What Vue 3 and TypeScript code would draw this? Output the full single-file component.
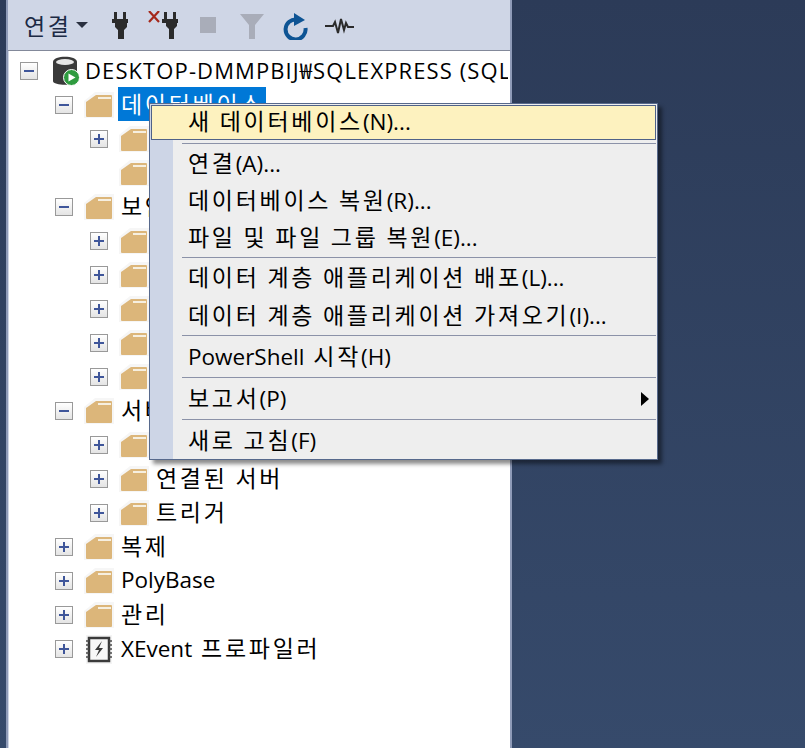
<script setup lang="ts">
interface Row { label: string; level: number; open?: boolean; kind?: string; selected?: boolean }
const rows: Row[] = [
  { label: '데이터베이스', level: 1, open: true, selected: true },
  { label: '시스템 데이터베이스', level: 2 },
  { label: '데이터베이스 스냅숏', level: 2, kind: 'leaf' },
  { label: '보안', level: 1, open: true },
  { label: '로그인', level: 2 },
  { label: '서버 역할', level: 2 },
  { label: '자격 증명', level: 2 },
  { label: '암호화 공급자', level: 2 },
  { label: '감사', level: 2 },
  { label: '서버 개체', level: 1, open: true },
  { label: '백업 장치', level: 2 },
  { label: '연결된 서버', level: 2 },
  { label: '트리거', level: 2 },
  { label: '복제', level: 1 },
  { label: 'PolyBase', level: 1 },
  { label: '관리', level: 1 },
  { label: 'XEvent 프로파일러', level: 1, kind: 'xevent' },
]
interface Item { label: string; arrow?: boolean; hot?: boolean }
const groups: Item[][] = [
  [{ label: '새 데이터베이스(N)...', hot: true }],
  [{ label: '연결(A)...' }, { label: '데이터베이스 복원(R)...' }, { label: '파일 및 파일 그룹 복원(E)...' }],
  [{ label: '데이터 계층 애플리케이션 배포(L)...' }, { label: '데이터 계층 애플리케이션 가져오기(I)...' }],
  [{ label: 'PowerShell 시작(H)' }],
  [{ label: '보고서(P)', arrow: true }],
  [{ label: '새로 고침(F)' }],
]
function seg(text: string): { t: string; ko: boolean }[] {
  return text
    .split(/([\uAC00-\uD7A3][\uAC00-\uD7A3 ]*)/)
    .filter((t) => t.length > 0)
    .map((t) => ({ t, ko: /[\uAC00-\uD7A3]/.test(t) }))
}
</script>

<template>
  <div class="desk">
    <section class="panel">
      <header class="toolbar">
        <span class="connect ko">연결</span>
        <i class="caret"></i>
        <svg class="plug" width="16" height="27" viewBox="0 0 16 27"><path d="M2 0h3v7h6V0h3v7h2v4h-1v4l-3 3v9H6v-9l-3-3v-4H0V7h2z" fill="#2b2b2b"/></svg>
        <svg class="plugx" width="30" height="28" viewBox="0 0 30 28"><path d="M1 0l10 11M11 0L1 11" stroke="#a5281b" stroke-width="2.2"/><path d="M16 1h3v7h6V1h3v7h2v4h-1v3l-3 3v10h-5V18l-3-3v-3h-4V8h2z" fill="#2b2b2b"/></svg>
        <i class="stop"></i>
        <svg class="funnel" width="24" height="25" viewBox="0 0 24 25"><path d="M0 0h24L15 11v14H9V11z" fill="#a9adb9"/></svg>
        <svg class="refresh" width="25" height="27" viewBox="0 0 25 27"><path d="M14 6.500A10 10 0 1 0 22.500 15" fill="none" stroke="#0e5494" stroke-width="4"/><path d="M11 0l11 7-11 6z" fill="#0e5494"/></svg>
        <svg class="pulse" width="29" height="18" viewBox="0 0 29 18"><path d="M0 10h8l2-4 3 11 3-14 3 11 2-7 2 4h6" fill="none" stroke="#2b2b2b" stroke-width="2"/></svg>
      </header>
      <div class="tree">
        <div class="root">
          <span class="box"><i class="h"></i></span>
          <svg class="db" width="28" height="30" viewBox="0 0 28 30">
            <path d="M1 6c0-7 24-7 24 0v19c0 5-24 5-24 0z" fill="#3a3a3a"/>
            <ellipse cx="13" cy="6" rx="9" ry="3" fill="#e6e6e6"/>
            <circle cx="19.500" cy="21.500" r="8" fill="#2e9b3f" stroke="#fff" stroke-width="1"/>
            <path d="M16.500 17.500l7 4-7 4z" fill="#fff"/>
          </svg>
          <span class="rootname">DESKTOP-DMMPBIJ₩SQLEXPRESS (SQL</span>
        </div>
        <div v-for="r in rows" :key="r.label" class="row" :class="'lv' + r.level">
          <span v-if="r.kind === 'leaf'" class="nobox"></span>
          <span v-else class="box"><i class="h"></i><i v-if="!r.open" class="v"></i></span>
          <svg v-if="r.kind === 'xevent'" class="xe" width="26" height="29" viewBox="0 0 26 29">
            <rect width="26" height="29" fill="#f4f4f4"/>
            <rect x="3" y="3" width="20" height="23" fill="#f8f8f8" stroke="#3a3a3a" stroke-width="2.500"/>
            <path d="M0 6h3M0 10h3M0 14h3M0 18h3M0 22h3M23 6h3M23 10h3M23 14h3M23 18h3M23 22h3" stroke="#4a4a4a" stroke-width="1.500"/>
            <path d="M16 6l-7 9h4l-3 7 7-9h-4z" fill="#3a3a3a"/>
          </svg>
          <svg v-else class="folder" width="30" height="26" viewBox="0 0 30 26">
            <path d="M0 9l11-9h19v26H0z" fill="#f6f6f6"/>
            <path d="M2 10L12 3h15q1 0 1 1v20q0 1-1 1H3q-1 0-1-1z" fill="#dcb67a"/>
            <rect x="14" y="5" width="13" height="2" fill="#f6efe0"/>
          </svg>
          <span class="label" :class="{ sel: r.selected }"><span v-for="(s, i) in seg(r.label)" :key="i" :class="{ ko: s.ko }">{{ s.t }}</span></span>
        </div>
      </div>
    </section>

    <nav class="menu">
      <template v-for="(g, i) in groups" :key="i">
        <div v-if="i > 0" class="sep"></div>
        <div v-for="m in g" :key="m.label" class="item" :class="[{ hot: m.hot }, 'n' + g.length]">
          <span v-for="(s, j) in seg(m.label)" :key="j" :class="{ ko: s.ko }">{{ s.t }}</span>
          <i v-if="m.arrow" class="arrow"></i>
        </div>
      </template>
    </nav>
  </div>
</template>

<style>
html, body { margin: 0; padding: 0; }
</style>

<style scoped>
.desk {
  position: relative;
  width: 805px;
  height: 748px;
  overflow: hidden;
  background: linear-gradient(180deg, #2c3b58 0%, #364a6b 100%);
  font-family: "Open Sans", "Noto Sans CJK KR", sans-serif;
  color: #000;
}
.ko {
  font-family: "Noto Sans CJK KR", sans-serif;
  font-size: 23px;
  letter-spacing: 2.7px;
  word-spacing: 0;
}
.panel {
  margin-left: 6px;
  width: 506px;
  height: 748px;
  box-sizing: border-box;
  background: #cfd6e6;
  border-left: 2px solid #8f9bb8;
  border-right: 2px solid #8f9bb8;
  display: flex;
  flex-direction: column;
}
.toolbar {
  height: 51px;
  flex: none;
  box-sizing: border-box;
  display: flex;
  align-items: center;
  padding-left: 16px;
  border-bottom: 1px solid #83899a;
}
.connect { color: #1c2a44; line-height: 1; }
.caret {
  margin-left: 4px;
  border-left: 6px solid transparent;
  border-right: 6px solid transparent;
  border-top: 6px solid #2a3040;
}
.plug { margin-left: 24px; margin-top: 1px; }
.plugx { margin-left: 20px; margin-top: -1px; }
.stop { margin-left: 22px; width: 16px; height: 16px; background: #a9adb9; }
.funnel { margin-left: 24px; margin-top: 2px; }
.refresh { margin-left: 19px; margin-top: 2px; }
.pulse { margin-left: 17px; }
.tree {
  flex: 1;
  background: #fff;
  margin-left: 1px;
  overflow: hidden;
  padding-top: 3px;
  font-size: 22.5px;
  word-spacing: 3px;
  white-space: pre;
}
.root, .row {
  height: 34px;
  display: flex;
  align-items: center;
}
.root { padding-left: 11px; }
.lv1 { padding-left: 46px; }
.lv2 { padding-left: 81px; }
.box {
  width: 18px;
  height: 18px;
  flex: none;
  box-sizing: border-box;
  position: relative;
  border: 1px solid #999;
  background: linear-gradient(180deg, #fff, #e4e4e4);
}
.nobox { width: 18px; flex: none; }
.box .h, .box .v { position: absolute; background: #3f569a; }
.box .h { left: 3px; top: 7px; width: 10px; height: 2px; }
.box .v { left: 7px; top: 3px; width: 2px; height: 10px; }
.db { margin-left: 14px; flex: none; }
.rootname {
  margin-left: 5px;
  margin-top: -4px;
  width: 423px;
  overflow: hidden;
  font-size: 22px;
  letter-spacing: 1.1px;
  word-spacing: 0;
}
.folder { margin-left: 11px; flex: none; }
.xe { margin-left: 13px; margin-right: 2px; flex: none; }
.label { padding: 0 3px; margin-left: 4px; margin-top: -2px; height: 34px; line-height: 33px; }
.sel { background: #0078d7; color: #fff; width: 142px; }
.menu {
  position: absolute;
  left: 149px;
  top: 103px;
  width: 509px;
  height: 357px;
  box-sizing: border-box;
  padding: 1px 1px 0 1px;
  border: 1px solid #57698c;
  background: linear-gradient(90deg, #cdd5e6 23px, #eee 23px);
  box-shadow: 4px 4px 4px rgba(0, 0, 0, 0.45);
  font-size: 22.5px;
  word-spacing: 3px;
  white-space: pre;
}
.item {
  position: relative;
  padding-left: 37px;
}
.item.n3 { height: 37px; line-height: 32px; }
.item.n2 { height: 37.5px; line-height: 33px; }
.item.n1 { height: 39px; line-height: 35px; }
.item.hot {
  height: 35px;
  line-height: 29px;
  margin-bottom: 3px;
  box-sizing: border-box;
  padding-left: 36px;
  border: 1px solid #4f6288;
  background: #fdf2bf;
}
.sep {
  height: 1px;
  margin-left: 31px;
  margin-bottom: 2px;
  background: #8b92a8;
}
.arrow {
  position: absolute;
  right: 7px;
  top: 12px;
  border-top: 7px solid transparent;
  border-bottom: 7px solid transparent;
  border-left: 8px solid #000;
}
</style>
